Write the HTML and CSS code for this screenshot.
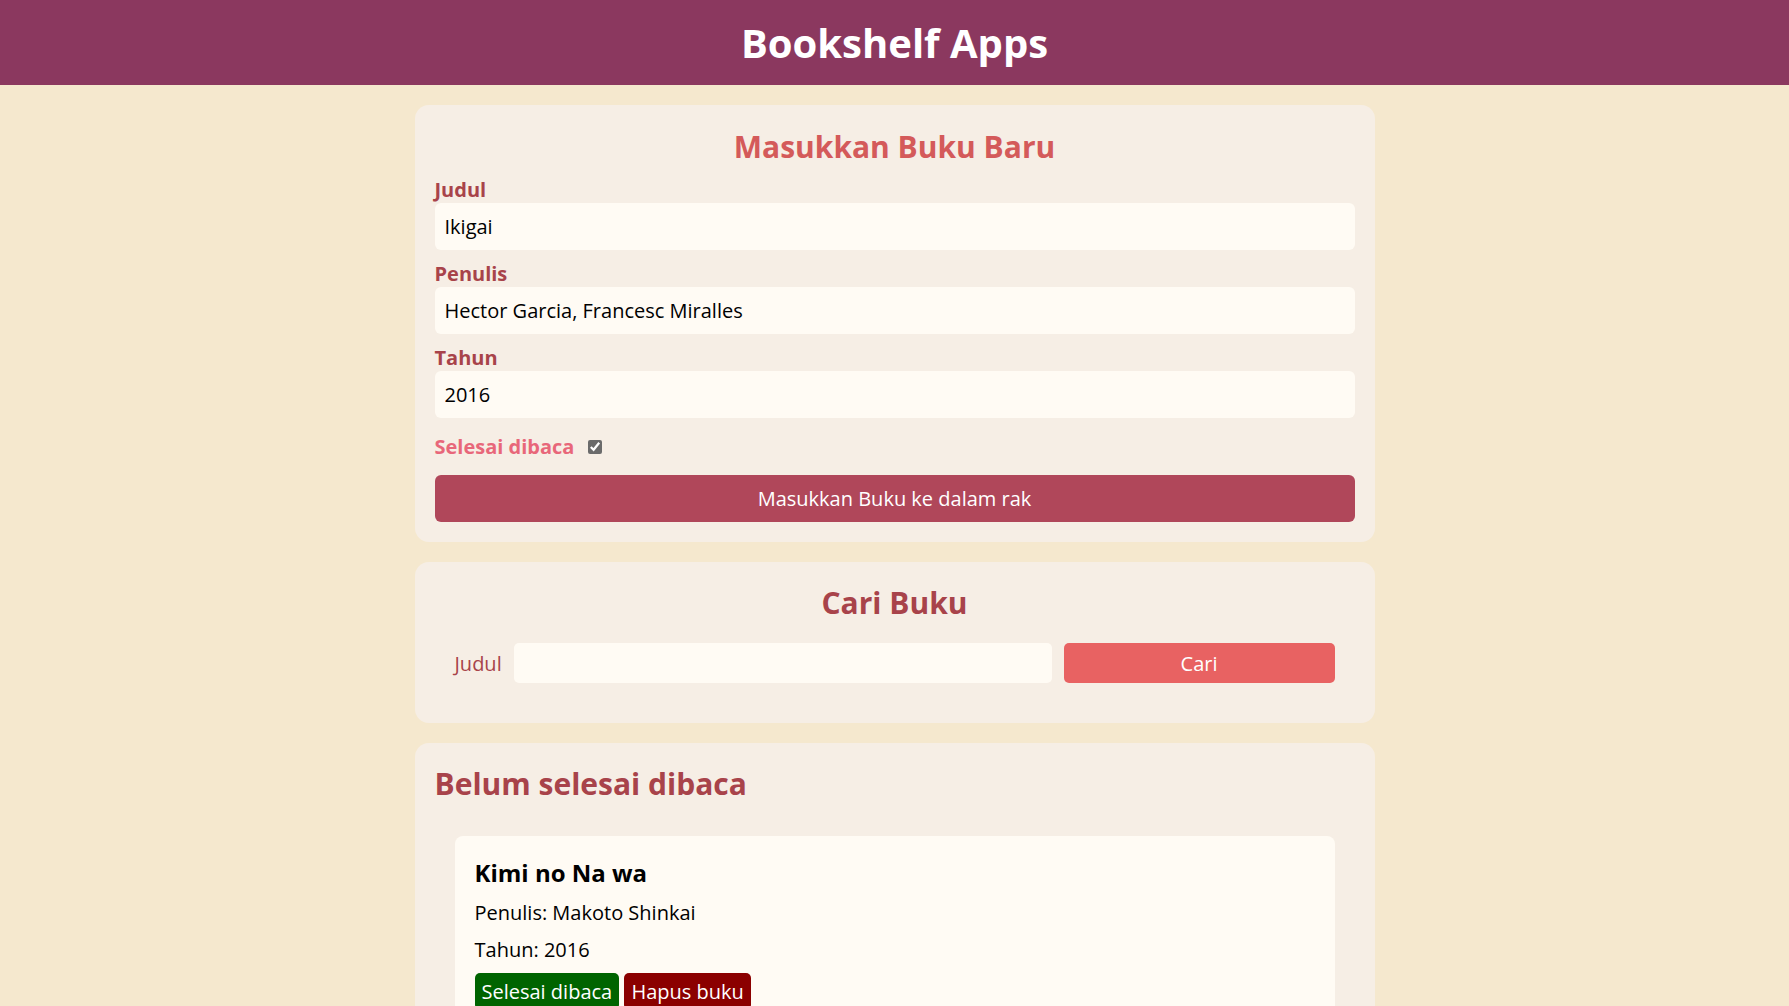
FILE: index.html
```html
<!DOCTYPE html>
<html lang="id">
<head>
<meta charset="utf-8">
<title>Bookshelf Apps</title>
<link rel="stylesheet" href="styles.css">
</head>
<body>
<header class="head-bar">
  <h1 class="head-title">Bookshelf Apps</h1>
</header>
<main class="main">
  <section class="card">
    <h2 class="card-title title-coral">Masukkan Buku Baru</h2>
    <form class="input-form">
      <div class="field">
        <label class="field-label" for="inputBookTitle">Judul</label>
        <input class="field-input" id="inputBookTitle" type="text" value="Ikigai">
      </div>
      <div class="field">
        <label class="field-label" for="inputBookAuthor">Penulis</label>
        <input class="field-input" id="inputBookAuthor" type="text" value="Hector Garcia, Francesc Miralles">
      </div>
      <div class="field">
        <label class="field-label" for="inputBookYear">Tahun</label>
        <input class="field-input" id="inputBookYear" type="number" value="2016">
      </div>
      <div class="check-row">
        <label class="check-label" for="inputBookIsComplete">Selesai dibaca</label>
        <input class="check-box" id="inputBookIsComplete" type="checkbox" checked>
      </div>
      <button class="submit-btn" type="submit">Masukkan Buku ke dalam rak</button>
    </form>
  </section>

  <section class="card">
    <h2 class="card-title title-dark">Cari Buku</h2>
    <form class="search-form">
      <label class="search-label" for="searchBookTitle">Judul</label>
      <input class="search-input" id="searchBookTitle" type="text">
      <button class="search-btn" type="submit">Cari</button>
    </form>
  </section>

  <section class="card">
    <h2 class="shelf-title">Belum selesai dibaca</h2>
    <div class="book-list">
      <article class="book-item">
        <h3 class="book-name">Kimi no Na wa</h3>
        <p class="book-meta">Penulis: Makoto Shinkai</p>
        <p class="book-meta">Tahun: 2016</p>
        <div class="book-actions">
          <button class="btn-green">Selesai dibaca</button> <button class="btn-red">Hapus buku</button>
        </div>
      </article>
    </div>
  </section>

  <section class="card">
    <h2 class="shelf-title">Selesai dibaca</h2>
    <div class="book-list">
      <article class="book-item">
        <h3 class="book-name">Ikigai</h3>
        <p class="book-meta">Penulis: Hector Garcia, Francesc Miralles</p>
        <p class="book-meta">Tahun: 2016</p>
        <div class="book-actions">
          <button class="btn-green">Belum selesai di Baca</button> <button class="btn-red">Hapus buku</button>
        </div>
      </article>
    </div>
  </section>
</main>
</body>
</html>
```
FILE: styles.css
```css
* {
  box-sizing: border-box;
}

body {
  margin: 0;
  background: #f5e8ce;
  font-family: "Open Sans", "Noto Sans", sans-serif;
  font-size: 20px;
  color: #000;
}

.head-bar {
  background: #8b385f;
  padding: 15px 0;
  text-align: center;
}

.head-title {
  margin: 0;
  font-size: 40px;
  font-weight: 700;
  color: #fff;
  line-height: normal;
}

.main {
  width: 960px;
  margin: 0 auto;
  padding-top: 20px;
  display: flex;
  flex-direction: column;
  gap: 20px;
}

.card {
  background: #f6eee5;
  border-radius: 14px;
  padding: 20px;
}

.card-title {
  margin: 0;
  font-size: 30px;
  font-weight: 700;
  text-align: center;
  line-height: normal;
}

.title-coral {
  color: #d45a5a;
  padding-top: 1px;
}

.title-dark {
  color: #a8434a;
}

.input-form {
  margin-top: 9px;
}

.field {
  display: flex;
  flex-direction: column;
  margin-bottom: 10px;
}

.field-label {
  font-weight: 700;
  color: #a8434a;
  line-height: normal;
}

.field-input {
  border: none;
  background: #fffbf4;
  border-radius: 6px;
  padding: 10px;
  font-family: inherit;
  font-size: 20px;
  line-height: 27px;
  height: 47px;
  color: #000;
  outline: none;
}

.field-input::-webkit-outer-spin-button,
.field-input::-webkit-inner-spin-button {
  -webkit-appearance: none;
  margin: 0;
}

.check-row {
  display: flex;
  align-items: center;
  margin: 15px 0 15px;
  height: 27px;
}

.check-label {
  font-weight: 700;
  color: #e8677a;
  margin-right: 10px;
}

.check-box {
  width: 14px;
  height: 14px;
  margin: 0 0 0 4px;
  accent-color: #6b6b6b;
}

.submit-btn {
  display: block;
  width: 100%;
  height: 47px;
  border: none;
  border-radius: 6px;
  background: #b0475a;
  color: #fff;
  font-family: inherit;
  font-size: 20px;
  padding: 10px;
}

.search-form {
  display: flex;
  align-items: center;
  gap: 12px;
  padding: 20px;
}

.search-label {
  color: #a8434a;
  font-size: 20px;
}

.search-input {
  flex: 2;
  min-width: 0;
  height: 40px;
  border: none;
  border-radius: 5px;
  background: #fffbf4;
  font-family: inherit;
  font-size: 20px;
  padding: 6px 10px;
  outline: none;
}

.search-btn {
  flex: 1;
  height: 40px;
  border: none;
  border-radius: 5px;
  background: #e86262;
  color: #fff;
  font-family: inherit;
  font-size: 20px;
}

.shelf-title {
  margin: 0;
  font-size: 30px;
  font-weight: 700;
  color: #a8434a;
  line-height: normal;
}

.book-list {
  padding: 20px;
  display: flex;
  flex-direction: column;
  gap: 20px;
}

.book-item {
  background: #fffbf4;
  border-radius: 8px;
  padding: 20px;
  margin-top: 12px;
}

.book-name {
  margin: 0;
  font-size: 24px;
  font-weight: 700;
  line-height: normal;
}

.book-meta {
  margin: 10px 0;
  line-height: normal;
}

.book-actions {
  margin-top: 9px;
}

.btn-green,
.btn-red {
  border: none;
  border-radius: 5px;
  color: #fff;
  font-family: inherit;
  font-size: 20px;
  padding: 5px 7px;
  margin: 0;
  line-height: normal;
}

.btn-green {
  background: #006400;
}

.btn-red {
  background: #8b0000;
}
```
